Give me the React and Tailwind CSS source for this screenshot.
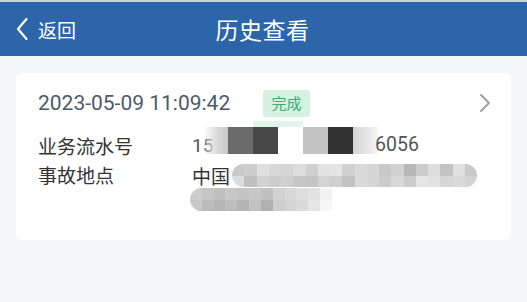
import React from "react";

const cjk = { fontFamily: '"Noto Sans CJK SC", "Noto Sans", sans-serif' };
const num = { fontFamily: 'Roboto, "Noto Sans", "Noto Sans CJK SC", sans-serif' };

const pillTop = ["#c9c9c9","#cdcdcd","#e0e0e0","#d8d8d8","#d4d4d4","#dcdcdc","#cfcfcf","#e2e2e2","#e4e4e4","#d0d0d0","#dadada","#d6d6d6","#c8c8c8","#d2d2d2","#b8b8b8","#cccccc","#dedede","#c2c2c2","#e0e0e0","#cacaca"];
const pillBot = ["#dcdcdc","#c0c0c0","#d2d2d2","#cdcdcd","#d0d0d0","#c6c6c6","#c4c4c4","#d4d4d4","#cfcfcf","#c2c2c2","#dadada","#d6d6d6","#cbcbcb","#d8d8d8","#cccccc","#e6e6e6","#e2e2e2","#d6d6d6","#d9d9d9","#d4d4d4"];
const p2Top = ["#cccccc","#c6c6c6","#c0c0c0","#c8c8c8","#c4c4c4","#c6c6c6","#c0c0c0","#d2d2d2","#d8d8d8","#dcdcdc","#e2e2e2","#f2f2f2"];
const p2Bot = ["#c8c8c8","#bcbcbc","#b6b6b6","#bdbdbd","#b4b4b4","#c2c2c2","#b0b0b0","#cecece","#d4d4d4","#dadada","#e6e6e6","#f6f6f6"];

function Pixels({ top, bot, w }) {
  return (
    <div className="flex flex-col">
      <div className="flex">
        {top.map((c, i) => (
          <div key={i} className="h-[12px]" style={{ width: w, background: c }} />
        ))}
      </div>
      <div className="flex">
        {bot.map((c, i) => (
          <div key={i} className="h-[11px]" style={{ width: w, background: c }} />
        ))}
      </div>
    </div>
  );
}

export default function App() {
  return (
    <div className="w-[527px] h-[302px] bg-[#f3f7f8] overflow-hidden" style={cjk}>
      <div className="h-[2px] bg-[#c9d3dc]" />
      <div className="h-[54px] bg-[#2c65a9] flex items-center relative text-white">
        <div className="flex items-center pl-[15px]">
          <svg width="14" height="24" viewBox="0 0 14 24" className="mr-[9px]">
            <path d="M11.5 2 L3 12 L11.5 22" fill="none" stroke="#ffffff" strokeWidth="2.2" strokeLinecap="round" strokeLinejoin="round" />
          </svg>
          <span className="text-[19px] leading-none">返回</span>
        </div>
        <div className="absolute left-0 right-0 top-0 bottom-0 flex items-center justify-center pointer-events-none">
          <span className="text-[23px] leading-none tracking-[0.5px] ml-[-2px]">历史查看</span>
        </div>
      </div>

      <div className="mx-[16px] mt-[17px] h-[167px] bg-white rounded-[6px] pl-[22px] pr-[18px] pt-[16px]">
        <div className="flex items-center h-[28px]">
          <span className="text-[21px] text-[#4b5b68] leading-none w-[225px]" style={num}>2023-05-09 11:09:42</span>
          <span className="h-[27px] w-[47px] rounded-[3px] bg-[#d4f1e1] text-[#3eab6b] text-[15px] flex items-center justify-center">完成</span>
          <div className="flex-1" />
          <svg width="14" height="20" viewBox="0 0 14 20" className="mr-[1px]">
            <path d="M3 2 L11 10 L3 18" fill="none" stroke="#a0a0a0" strokeWidth="2" strokeLinecap="round" strokeLinejoin="round" />
          </svg>
        </div>

        <div className="flex items-center h-[36px] mt-[10px] relative">
          <span className="w-[154px] text-[19px] text-[#333333] leading-none">业务流水号</span>
          <div className="flex items-center relative">
            <div className="w-[13px] overflow-visible whitespace-nowrap">
              <span className="text-[19px] text-[#555] leading-none" style={num}>15</span>
            </div>
            <div className="absolute left-[61px] top-[-11px] w-[50px] h-[6px] bg-[#e2f5ec]" />
            <div className="flex h-[27px] -translate-y-[5px] relative">
              <div className="w-[23px] bg-gradient-to-r from-[rgba(235,235,235,0.3)] via-[#dcdcdc] to-[#c8c8c8]" />
              <div className="w-[25px] bg-[#6b6b6b]" />
              <div className="w-[25px] bg-[#474747]" />
              <div className="w-[25px] bg-white" />
              <div className="w-[25px] bg-[#c4c4c4]" />
              <div className="w-[25px] bg-[#323232]" />
              <div className="w-[25px] bg-gradient-to-r from-[#d2d2d2] to-[#f6f6f6]" />
            </div>
            <span className="text-[19.5px] text-[#555] leading-none ml-[-3px] relative" style={num}>6056</span>
          </div>
        </div>

        <div className="flex items-start">
          <span className="w-[154px] text-[19px] text-[#333333] leading-[24px]">事故地点</span>
          <div className="flex flex-col">
            <div className="flex items-center h-[24px]">
              <span className="text-[19px] text-[#333333] leading-none">中国</span>
              <div className="ml-[2px] h-[23px] w-[245px] rounded-full overflow-hidden">
                <Pixels top={pillTop} bot={pillBot} w={12.5} />
              </div>
            </div>
            <div className="mt-[1px] ml-[-2px] h-[23px] w-[142px] rounded-l-full rounded-r-[2px] overflow-hidden">
              <Pixels top={p2Top} bot={p2Bot} w={12} />
            </div>
          </div>
        </div>
      </div>
    </div>
  );
}
